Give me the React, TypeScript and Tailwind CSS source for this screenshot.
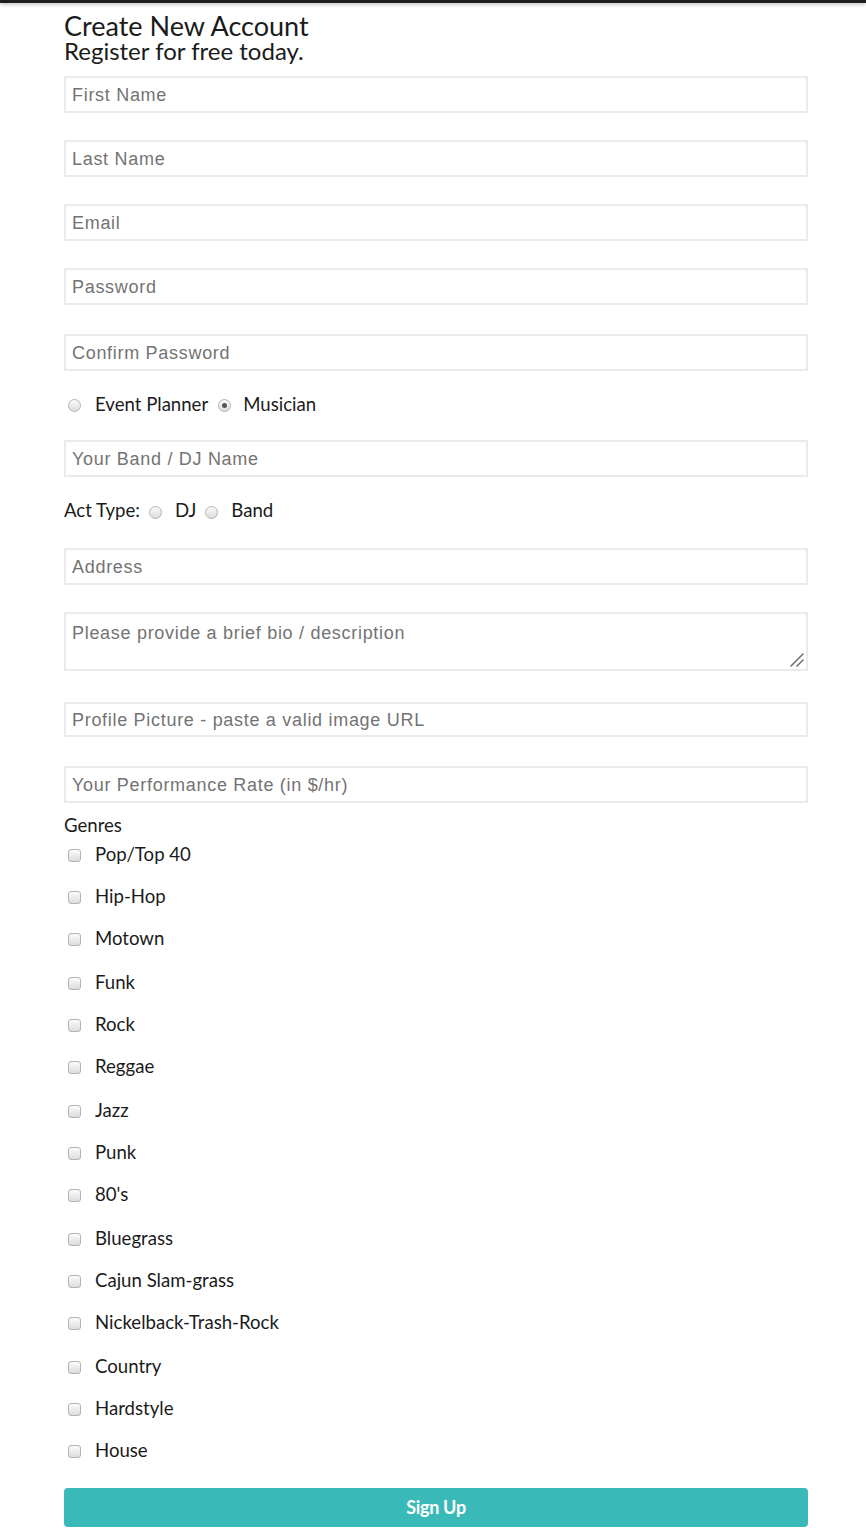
const genres = [
  'Pop/Top 40',
  'Hip-Hop',
  'Motown',
  'Funk',
  'Rock',
  'Reggae',
  'Jazz',
  'Punk',
  "80's",
  'Bluegrass',
  'Cajun Slam-grass',
  'Nickelback-Trash-Rock',
  'Country',
  'Hardstyle',
  'House',
]

// row tops for the genre checkboxes, taken from the layout
const genreGaps = [0, 42, 42, 44, 42, 42, 44, 42, 42, 44, 42, 42, 44, 42, 42]

function Field({ placeholder, className = '' }: { placeholder: string; className?: string }) {
  return (
    <div
      className={`w-[744px] h-[37px] border-2 border-[#eaeaea] bg-white flex items-center px-[6px] pt-[2px] ${className}`}
    >
      <span className="text-[18px] text-[#737373] font-['Liberation_Sans',Arial,sans-serif] tracking-[0.7px]">
        {placeholder}
      </span>
    </div>
  )
}

function Radio({ checked = false }: { checked?: boolean }) {
  return (
    <span className="inline-flex w-[13px] h-[13px] rounded-full border border-[#b3b3b3] bg-gradient-to-b from-[#fbfbfb] to-[#dcdcdc] items-center justify-center shrink-0">
      {checked && <span className="w-[5px] h-[5px] rounded-full bg-[#555]" />}
    </span>
  )
}

function Checkbox() {
  return (
    <span className="inline-block w-[13px] h-[13px] rounded-[3px] border border-[#b3b3b3] bg-gradient-to-b from-[#fbfbfb] to-[#dcdcdc] shrink-0" />
  )
}

export default function App() {
  return (
    <div className="min-h-screen bg-white font-['Lato','Open_Sans',sans-serif] text-[#1b1b1b]">
      {/* top bar */}
      <div className="h-[3px] bg-[#1e1e1e] shadow-[0_1px_4px_rgba(0,0,0,0.35)]" />

      <div className="ml-16 w-[744px] pb-10">
        <h1 className="text-[27px] leading-[27px] mt-[9px]">Create New Account</h1>
        <h2 className="text-[24px] leading-[24px]">Register for free today.</h2>

        <Field placeholder="First Name" className="mt-[13px]" />
        <Field placeholder="Last Name" className="mt-[27px]" />
        <Field placeholder="Email" className="mt-[27px]" />
        <Field placeholder="Password" className="mt-[27px]" />
        <Field placeholder="Confirm Password" className="mt-[29px]" />

        <div className="mt-[22px] h-[24px] flex items-center text-[18.6px] pl-[4px]">
          <Radio />
          <span className="ml-[14px]">Event Planner</span>
          <span className="ml-[10px] flex"><Radio checked /></span>
          <span className="ml-[12px]">Musician</span>
        </div>

        <Field placeholder="Your Band / DJ Name" className="mt-[23px]" />

        <div className="mt-[22px] h-[24px] flex items-center text-[18.6px]">
          <span>Act Type:</span>
          <span className="ml-[9px] mt-[2px] flex"><Radio /></span>
          <span className="ml-[13px]">DJ</span>
          <span className="ml-[9px] mt-[2px] flex"><Radio /></span>
          <span className="ml-[13px]">Band</span>
        </div>

        <Field placeholder="Address" className="mt-[25px]" />

        <div className="mt-[27px] w-[744px] h-[59px] border-2 border-[#eaeaea] relative px-[6px] pt-[6px]">
          <span className="text-[18px] text-[#737373] font-['Liberation_Sans',Arial,sans-serif] tracking-[0.7px]">
            Please provide a brief bio / description
          </span>
          <svg className="absolute right-[1px] bottom-[1px]" width="16" height="16" viewBox="0 0 16 16">
            <path d="M2 14 L14 2" stroke="#666" strokeWidth="1.4" strokeLinecap="round" />
            <path d="M8 14 L14 8" stroke="#666" strokeWidth="1.4" strokeLinecap="round" />
          </svg>
        </div>

        <Field placeholder="Profile Picture - paste a valid image URL" className="mt-[31px] !h-[35px]" />
        <Field placeholder="Your Performance Rate (in $/hr)" className="mt-[29px]" />

        <div className="mt-[10px] text-[18.6px] leading-[24px]">Genres</div>

        <div className="flex flex-col">
          {genres.map((g, i) => (
            <div
              key={g}
              className="flex items-center h-[24px] text-[18.6px] pl-[4px]"
              style={{ marginTop: i === 0 ? 6 : genreGaps[i] - 24 }}
            >
              <Checkbox />
              <span className="ml-[14px]">{g}</span>
            </div>
          ))}
        </div>

        <button className="mt-[25px] w-[744px] h-[39px] rounded-[4px] bg-[#39b9b7] text-white text-[18px] font-bold tracking-[-0.3px]">
          Sign Up
        </button>
      </div>
    </div>
  )
}
